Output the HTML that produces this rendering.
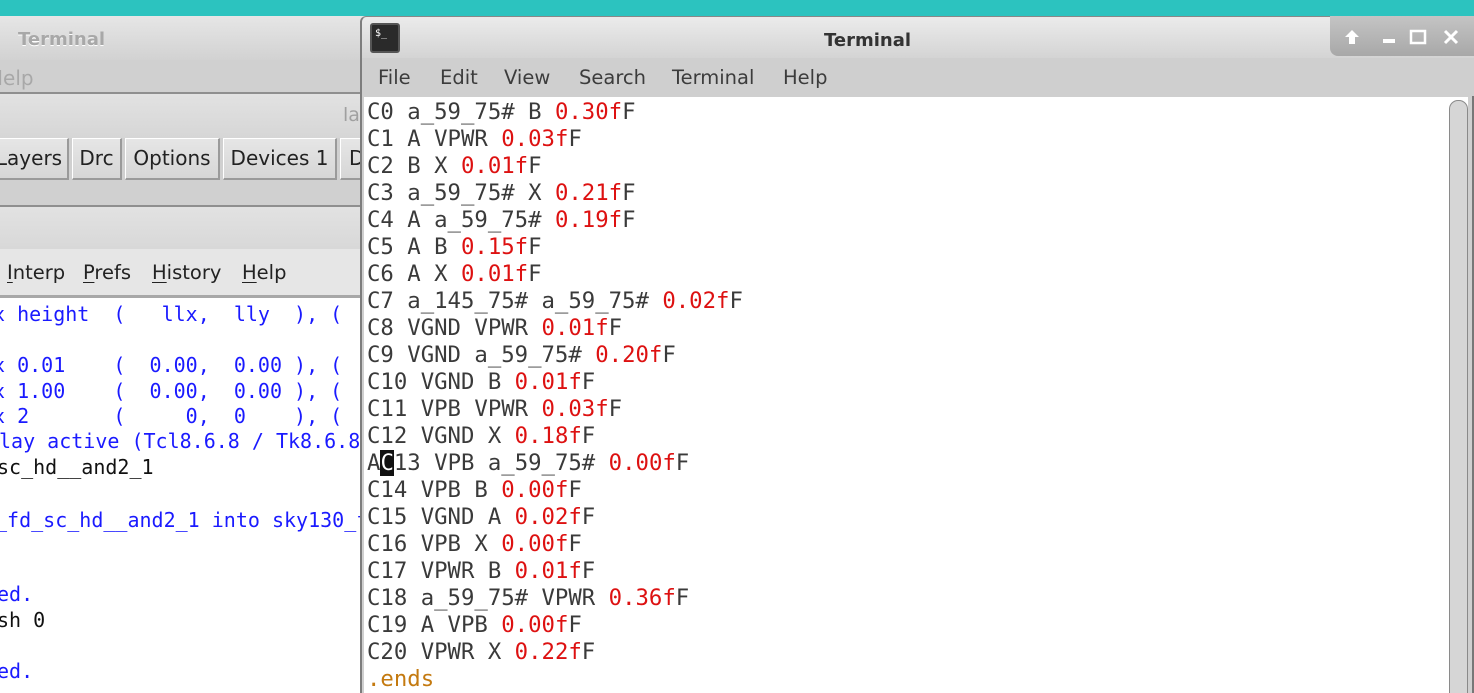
<!DOCTYPE html>
<html><head><meta charset="utf-8"><style>
*{margin:0;padding:0;box-sizing:border-box}
html,body{width:1474px;height:693px;overflow:hidden}
body{position:relative;background:#2dc2bd;font-family:"DejaVu Sans","Liberation Sans",sans-serif}
.abs{position:absolute}
.mono{font-family:"DejaVu Sans Mono","Liberation Mono",monospace;white-space:pre}
.lt{position:absolute;left:-7px;font-size:20px;line-height:26px;color:#1a1aff}
.k{color:#111}
.btn{position:absolute;top:138px;height:42px;background:linear-gradient(#e6e6e6,#d6d6d6);border:1px solid #fff;border-right:2px solid #9a9a9a;border-bottom:2px solid #9a9a9a;font-size:20px;line-height:38px;color:#222;text-align:center}
.tl{position:absolute;left:367px;font-size:22.3px;line-height:27px;color:#3a3a3a}
.r{color:#dd1111}
.mi{position:absolute;top:66px;font-size:19.5px;color:#3c3c3c}
u{text-decoration:underline;text-underline-offset:3px}
</style></head><body>
<div class="abs" style="left:0;top:0;width:1474px;height:16px;background:#2cc3bf"></div>
<div class="abs" style="left:0;top:16px;width:370px;height:677px;background:#d0d0d0"></div>
<div class="abs" style="left:0;top:16px;width:370px;height:44px;background:linear-gradient(#e6e6e6,#d2d2d2)"></div>
<div class="abs" style="left:18px;top:29px;font-size:18px;font-weight:bold;color:#a8a8a8;text-shadow:0 1px 0 #fff">Terminal</div>
<div class="abs" style="left:-12px;top:66px;font-size:20px;color:#a8a8a8">Help</div>
<div class="abs" style="left:0;top:92px;width:370px;height:2px;background:#8f8f8f"></div>
<div class="abs" style="left:0;top:94px;width:370px;height:44px;background:linear-gradient(#e2e2e2,#d6d6d6)"></div>
<div class="abs" style="left:343px;top:104px;font-size:19px;color:#a0a0a0">la</div>
<div class="btn" style="left:-10px;width:79px">Layers</div>
<div class="btn" style="left:72px;width:50px">Drc</div>
<div class="btn" style="left:125px;width:95px">Options</div>
<div class="btn" style="left:223px;width:114px">Devices 1</div>
<div class="btn" style="left:340px;width:40px;text-align:left;padding-left:8px">D</div>
<div class="abs" style="left:0;top:205px;width:370px;height:2px;background:#8f8f8f"></div>
<div class="abs" style="left:0;top:207px;width:370px;height:42px;background:linear-gradient(#e2e2e2,#d8d8d8)"></div>
<div class="abs" style="left:0;top:249px;width:370px;height:46px;background:#e6e6e6"></div>
<div class="abs" style="left:7px;top:261px;font-size:19.5px;color:#222"><u>I</u>nterp</div>
<div class="abs" style="left:83px;top:261px;font-size:19.5px;color:#222"><u>P</u>refs</div>
<div class="abs" style="left:152px;top:261px;font-size:19.5px;color:#222"><u>H</u>istory</div>
<div class="abs" style="left:242px;top:261px;font-size:19.5px;color:#222"><u>H</u>elp</div>
<div class="abs" style="left:0;top:295px;width:370px;height:3px;background:#a8a8a8"></div>
<div class="abs" style="left:0;top:298px;width:370px;height:395px;background:#fff"></div>
<div class="lt mono" style="top:301px">x height  (   llx,  lly  ), (</div>
<div class="lt mono" style="top:352px">x 0.01    (  0.00,  0.00 ), (</div>
<div class="lt mono" style="top:378px">x 1.00    (  0.00,  0.00 ), (</div>
<div class="lt mono" style="top:403px">x 2       (     0,  0    ), (</div>
<div class="lt mono" style="top:428px;left:-1px">lay active (Tcl8.6.8 / Tk8.6.8)</div>
<div class="lt mono k" style="top:454px;left:-3px">sc_hd__and2_1</div>
<div class="lt mono" style="top:507px;left:-5px">_fd_sc_hd__and2_1 into sky130_f</div>
<div class="lt mono" style="top:581px;left:-3px">ed.</div>
<div class="lt mono k" style="top:607px;left:-3px">sh 0</div>
<div class="lt mono" style="top:658px;left:-3px">ed.</div>
<div class="abs" style="left:360px;top:16px;width:1114px;height:677px;background:#cfcfcf;border-left:2px solid #7d7d7d;border-top:1px solid #888;border-top-left-radius:6px"></div>
<div class="abs" style="left:362px;top:17px;width:1112px;height:41px;background:linear-gradient(#ebebeb,#d4d4d4);border-top-left-radius:5px"></div>
<div class="abs" style="left:370px;top:23px;width:30px;height:30px;background:#2a2a2a;border:2px solid #555;border-radius:3px;color:#fff;font-size:10px;line-height:10px;padding:4px 0 0 3px;font-family:'DejaVu Sans Mono',monospace">$_</div>
<div class="abs" style="left:824px;top:30px;font-size:18px;font-weight:bold;color:#333">Terminal</div>
<div class="abs" style="left:1330px;top:16px;width:144px;height:40px;background:linear-gradient(#c4c4c4,#a8a8a8);border-bottom-left-radius:8px"></div>
<svg class="abs" style="left:1340px;top:26px" width="130" height="24" viewBox="0 0 130 24">
<path d="M12 4 L5 11 H9 V18 H15 V11 H19 Z" fill="#fff"/>
<rect x="43" y="13" width="12" height="4" fill="#fff"/>
<rect x="71" y="5" width="14" height="12" fill="none" stroke="#fff" stroke-width="2.5"/>
<path d="M105 5 L117 17 M117 5 L105 17" stroke="#fff" stroke-width="3"/>
</svg>
<div class="mi" style="left:378px">File</div>
<div class="mi" style="left:440px">Edit</div>
<div class="mi" style="left:504px">View</div>
<div class="mi" style="left:579px">Search</div>
<div class="mi" style="left:672px">Terminal</div>
<div class="mi" style="left:783px">Help</div>
<div class="abs" style="left:364px;top:97px;width:1104px;height:596px;background:#fff"></div>
<div class="abs" style="left:1449px;top:100px;width:19px;height:600px;background:#d6d6d6;border:1px solid #8a8a8a;border-radius:9px 9px 0 0"></div>
<div class="abs" style="left:1469px;top:96px;width:5px;height:597px;background:#cfcfcf;border-right:2px solid #777"></div>
<div class="tl mono" style="top:99px">C0 a_59_75# B <span class="r">0.30f</span>F
C1 A VPWR <span class="r">0.03f</span>F
C2 B X <span class="r">0.01f</span>F
C3 a_59_75# X <span class="r">0.21f</span>F
C4 A a_59_75# <span class="r">0.19f</span>F
C5 A B <span class="r">0.15f</span>F
C6 A X <span class="r">0.01f</span>F
C7 a_145_75# a_59_75# <span class="r">0.02f</span>F
C8 VGND VPWR <span class="r">0.01f</span>F
C9 VGND a_59_75# <span class="r">0.20f</span>F
C10 VGND B <span class="r">0.01f</span>F
C11 VPB VPWR <span class="r">0.03f</span>F
C12 VGND X <span class="r">0.18f</span>F
A<span style="background:#111;color:#fff">C</span>13 VPB a_59_75# <span class="r">0.00f</span>F
C14 VPB B <span class="r">0.00f</span>F
C15 VGND A <span class="r">0.02f</span>F
C16 VPB X <span class="r">0.00f</span>F
C17 VPWR B <span class="r">0.01f</span>F
C18 a_59_75# VPWR <span class="r">0.36f</span>F
C19 A VPB <span class="r">0.00f</span>F
C20 VPWR X <span class="r">0.22f</span>F
<span style="color:#c47a10">.ends</span></div>
</body></html>
